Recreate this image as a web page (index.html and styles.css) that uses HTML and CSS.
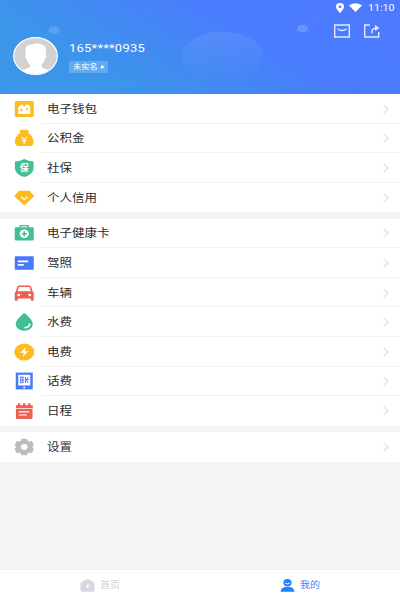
FILE: index.html
```
<!DOCTYPE html>
<html lang="zh-CN">
<head>
    <meta charset="UTF-8">
    <meta name="viewport" content="width=device-width, initial-scale=1.0">
    <title>我的</title>
    <link rel="stylesheet" href="styles.css">
</head>
<body>
    <div class="app">
        <header class="header">
            <svg class="header-bg" viewBox="0 0 400 94" preserveAspectRatio="none">
                <defs>
                    <linearGradient id="bubble" x1="0" y1="0" x2="0" y2="1">
                        <stop offset="0" stop-color="#fff" stop-opacity=".08"/>
                        <stop offset="1" stop-color="#fff" stop-opacity="0"/>
                    </linearGradient>
                </defs>
                <ellipse cx="222.500" cy="57" rx="41" ry="25.500" fill="url(#bubble)"/>
                <ellipse cx="54" cy="30" rx="5.500" ry="3.800" fill="#fff" fill-opacity=".16"/>
                <ellipse cx="302.500" cy="28.500" rx="5.500" ry="3.800" fill="#fff" fill-opacity=".18"/>
                <path d="M0 63L50 33M127 27L170 0M307 26L338 6" stroke="#fff" stroke-opacity=".07" fill="none"/>
            </svg>
            <div class="status-bar">
                <svg width="8" height="10" viewBox="0 0 8 10"><path fill="#fff" fill-rule="evenodd" d="M4 0a4 3.700 0 0 0-4 3.700C0 6.200 4 10 4 10s4-3.800 4-6.300A4 3.700 0 0 0 4 0zm0 2.400a1.500 1.300 0 1 1 0 2.600 1.500 1.300 0 0 1 0-2.600z"/></svg>
                <svg class="wifi" width="13" height="9" viewBox="0 0 13 9"><path fill="#fff" d="M0 2.600Q6.500-2 13 2.600L6.500 9z"/></svg>
                <span class="time">11:10</span>
            </div>
            <div class="actions">
                <svg width="16" height="14" viewBox="0 0 16 14" fill="none" stroke="#e4ebff" stroke-width="1.400"><path d="M.7 1h14.600v12H.7zM3.500 4.800Q8 8.300 12.500 4.800"/></svg>
                <svg width="16" height="14" viewBox="0 0 16 14" fill="none" stroke="#e4ebff" stroke-width="1.400"><path d="M6 1H.7v12h14V8M8 9.500V7q0-2.700 4-2.700"/><path d="M11 .8L15.500 4.300l-4.500 2.500z" fill="#e4ebff" stroke="none"/></svg>
            </div>
            <div class="user">
                <svg class="avatar" viewBox="0 0 45 38" preserveAspectRatio="none">
                    <defs><clipPath id="face"><ellipse cx="22.500" cy="19" rx="21.300" ry="17.900"/></clipPath></defs>
                    <ellipse cx="22.500" cy="19" rx="21.800" ry="18.400" fill="#d2d2d2" stroke="#fff" stroke-width="1.200"/>
                    <path clip-path="url(#face)" fill="#fff" d="M12.800 17.500C12 11 13 8 17 8C21 6 27 6 30 8C33 9 33.500 12 32.700 17.500C34 18 33.500 21.500 31.800 22C31.300 25 30 26.500 28.500 28C28 31 31 31.500 37 33.500V38H8V33.500C14 31.500 18 31 17 28C15.500 26.500 14.200 25 13.700 22C12 21.500 11.500 18 12.800 17.500Z"/>
                </svg>
                <div class="info">
                    <div class="phone">165****0935</div>
                    <div class="badge"><span class="badge-text">未实名</span><svg width="4" height="4" viewBox="0 0 4 4"><path fill="#fff" d="M0 0l4 2-4 2z"/></svg></div>
                </div>
            </div>
        </header>

        <main class="menu">
            <!-- Wallet and credit -->
            <section class="group">
                <div class="row">
                    <svg class="icon" viewBox="0 0 20 18"><rect x=".5" y="1" width="19" height="16" rx="1.500" fill="#fdbb1f"/><path fill="#fff" d="M4 6.500h12V14H4zM6 4.800h3v2H6zM11 4.800h4v2h-4z"/><path stroke="#fdbb1f" stroke-width=".9" d="M5.500 10h3.500M7.200 8.400v3.200"/><path fill="#fdbb1f" d="M12 8h1.500v2H12z"/></svg>
                    <span class="label">电子钱包</span>
                    <svg class="arrow" viewBox="0 0 6 10"><path d="M.7 1l4.600 4L.7 9"/></svg>
                </div>
                <div class="row">
                    <svg class="icon" viewBox="0 0 20 18"><path fill="#fdbb1f" d="M5.500 1Q10 .3 14.500 1L14 4C17.500 5.500 19.300 10 19.300 13.500 19.300 16 17.500 17 15.500 17h-11C2.500 17 .7 16 .7 13.500.7 10 2.500 5.500 6 4z"/><path fill="none" stroke="#fff" stroke-width="1.200" d="M7.500 7.800l2.500 3.200 2.500-3.200M10 10.500v4.200M8 11.900h4"/></svg>
                    <span class="label">公积金</span>
                    <svg class="arrow" viewBox="0 0 6 10"><path d="M.7 1l4.600 4L.7 9"/></svg>
                </div>
                <div class="row">
                    <svg class="icon" viewBox="0 0 20 18"><path fill="#43bd94" d="M10 0Q14 2.300 19.300 2.500V9c0 5-5 8-9.300 9C5.700 17 .7 14 .7 9V2.500Q6 2.300 10 0z"/><text class="shield-text" x="10" y="12.200">保</text></svg>
                    <span class="label">社保</span>
                    <svg class="arrow" viewBox="0 0 6 10"><path d="M.7 1l4.600 4L.7 9"/></svg>
                </div>
                <div class="row">
                    <svg class="icon" viewBox="0 0 20 18"><path fill="#fdbb1f" d="M4.500 1.800h11L20 7.300 10 16.500 0 7.300z"/><path fill="none" stroke="#fff" stroke-width="1.300" d="M6.800 8l3.200 2.500L13.200 8"/></svg>
                    <span class="label">个人信用</span>
                    <svg class="arrow" viewBox="0 0 6 10"><path d="M.7 1l4.600 4L.7 9"/></svg>
                </div>
            </section>

            <!-- Daily services -->
            <section class="group">
                <div class="row">
                    <svg class="icon" viewBox="0 0 20 18"><path fill="none" stroke="#43bd94" stroke-width="1.300" d="M6 4V1.700h8V4"/><rect x=".5" y="3.300" width="19" height="13.200" rx="1.300" fill="#43bd94"/><ellipse cx="10" cy="9.800" rx="4.600" ry="4.200" fill="#fff"/><path stroke="#43bd94" stroke-width="1.600" d="M7.300 9.800h5.400M10 7.300v5"/></svg>
                    <span class="label">电子健康卡</span>
                    <svg class="arrow" viewBox="0 0 6 10"><path d="M.7 1l4.600 4L.7 9"/></svg>
                </div>
                <div class="row">
                    <svg class="icon" viewBox="0 0 20 18"><rect x=".5" y="2.300" width="19" height="13.400" rx=".6" fill="#4978fb"/><path stroke="#fff" stroke-width="1.700" d="M3.500 7.300h10.500M3.500 10.900h6"/></svg>
                    <span class="label">驾照</span>
                    <svg class="arrow" viewBox="0 0 6 10"><path d="M.7 1l4.600 4L.7 9"/></svg>
                </div>
                <div class="row">
                    <svg class="icon" viewBox="0 0 20 18"><path fill="#ed604f" fill-rule="evenodd" d="M4.500 1.500h11Q16.500 1.500 17 3l1.400 4.500q1.100.5 1.100 2V16q0 .7-.7.700h-1.600q-.7 0-.7-.7v-1.500h-13V16q0 .7-.7.700H1.200Q.5 16.700.5 16V9.500q0-1.500 1.100-2L3 3q.5-1.500 1.500-1.500zM4.700 3L3.400 7.200h13.200L15.300 3z"/><ellipse cx="4.500" cy="11" rx="1.500" ry="1.200" fill="#fff"/><ellipse cx="15.500" cy="11" rx="1.500" ry="1.200" fill="#fff"/></svg>
                    <span class="label">车辆</span>
                    <svg class="arrow" viewBox="0 0 6 10"><path d="M.7 1l4.600 4L.7 9"/></svg>
                </div>
                <div class="row">
                    <svg class="icon" viewBox="0 0 20 18"><path fill="#43bd94" d="M10 .2q1 0 2 1.300c3 3 6.500 6 6.500 9.200 0 4-3.500 7-8.500 7s-8.500-3-8.500-7C1.500 7.500 5 4.500 8 1.500Q9 .2 10 .2z"/><path fill="none" stroke="#fff" stroke-width="1.400" d="M10.200 14.800q4.700-.3 5.500-4.300"/></svg>
                    <span class="label">水费</span>
                    <svg class="arrow" viewBox="0 0 6 10"><path d="M.7 1l4.600 4L.7 9"/></svg>
                </div>
                <div class="row">
                    <svg class="icon" viewBox="0 0 20 18"><ellipse cx="10" cy="9" rx="10" ry="8.600" fill="#fdbb1f"/><path fill="#fff" d="M11.500 4L6 9.700h3.500L8.500 14 14 8.300h-3.500z"/></svg>
                    <span class="label">电费</span>
                    <svg class="arrow" viewBox="0 0 6 10"><path d="M.7 1l4.600 4L.7 9"/></svg>
                </div>
                <div class="row">
                    <svg class="icon" viewBox="0 0 20 18"><rect x="1.500" y=".6" width="17" height="16.800" fill="#4978fb"/><path fill="#fff" d="M4 2.800h12v10.700H4z"/><path fill="none" stroke="#4978fb" stroke-width="1" d="M6 5.200h3.500M6.500 5v6M6 8h3.500M8.700 5.500V11M6 10.700h3M11.200 5v6M11 7.500h3.500M13.500 5v2.500M12 8l2.300 3"/><circle cx="10" cy="15.500" r="1" fill="#fff"/></svg>
                    <span class="label">话费</span>
                    <svg class="arrow" viewBox="0 0 6 10"><path d="M.7 1l4.600 4L.7 9"/></svg>
                </div>
                <div class="row">
                    <svg class="icon" viewBox="0 0 20 18"><path fill="#ed604f" d="M1.700 3.300h2V1.300h2.300v2h2.800V1.300h2.300v2h2.800V1.300h2.300v2h2.400V6.200H1.700zM1.700 7.100h16.600v9q0 .8-.8.800h-15q-.8 0-.8-.8z"/><path stroke="#fff" stroke-width="1.200" d="M4.500 9.800h10.500M4.500 13h8"/></svg>
                    <span class="label">日程</span>
                    <svg class="arrow" viewBox="0 0 6 10"><path d="M.7 1l4.600 4L.7 9"/></svg>
                </div>
            </section>

            <section class="group">
                <div class="row">
                    <svg class="icon" viewBox="0 0 20 18"><path fill="#b9bbbd" stroke="#b9bbbd" stroke-linejoin="round" fill-rule="evenodd" d="M7.500 1.300h5l.8 2 1.500.7 2.700-.5L19 7l-1.400 2 1.400 2-1.500 3.500-2.700-.5-1.500.7-.8 2h-5l-.8-2-1.500-.7-2.700.5L1 11l1.400-2L1 7l1.500-3.500 2.700.5 1.500-.7zM10 5.500a4 3.500 0 1 0 0 7 4 3.500 0 0 0 0-7z"/></svg>
                    <span class="label">设置</span>
                    <svg class="arrow" viewBox="0 0 6 10"><path d="M.7 1l4.600 4L.7 9"/></svg>
                </div>
            </section>
        </main>

        <nav class="tabs">
            <div class="tab">
                <svg width="15" height="13" viewBox="0 0 15 13"><path fill="#d7d7e2" d="M7.500 0q.8 0 2 .8l4 2.200q1 .7 1 1.800v6.700q0 1.200-1.300 1.200H1.800Q.5 12.700.5 11.500V4.800Q.5 3.700 1.500 3l4-2.200q1.200-.8 2-.8z"/><path fill="#fff" d="M6.500 5.500h2V9h-2z"/></svg>
                <span class="tab-text">首页</span>
            </div>
            <div class="tab active">
                <svg width="15" height="13" viewBox="0 0 15 13"><path fill="#2482f8" d="M7.500 0c2.700 0 4.200 1.600 4.200 3.700S10 7.500 7.500 7.500 3.300 5.800 3.300 3.700 4.800 0 7.500 0zM5 8h5q4 .7 4.500 4.700H.5Q1 8.700 5 8z"/><path fill="none" stroke="#fff" stroke-width="1" d="M5.200 4Q7.500 6 9.800 4"/></svg>
                <span class="tab-text">我的</span>
            </div>
        </nav>
    </div>
</body>
</html>
```
FILE: styles.css
```
* {
    box-sizing: border-box;
}
body {
    margin: 0;
    font-family: Roboto, "Noto Sans CJK SC", sans-serif;
    background: #f4f4f4;
}
.app {
    display: flex;
    flex-direction: column;
    width: 400px;
    height: 600px;
    overflow: hidden;
}
.header {
    position: relative;
    flex: none;
    height: 94px;
    background: linear-gradient(32deg, #3c96e8 0%, #3c95ea 24%, #4a7bfe 65%, #4c7afe 100%);
    color: #fff;
}
.header-bg {
    position: absolute;
    top: 0;
    left: 0;
    width: 100%;
    height: 100%;
}
.status-bar {
    display: flex;
    justify-content: flex-end;
    align-items: center;
    height: 15px;
    padding-right: 6px;
}
.wifi {
    margin: 0 6px 0 5px;
}
.time {
    width: 26px;
    font-size: 9.2px;
    line-height: 15px;
    transform: scaleX(1.16);
    transform-origin: left;
}
.actions {
    display: flex;
    justify-content: flex-end;
    gap: 14px;
    height: 22px;
    padding: 9px 20px 0 0;
}
.user {
    display: flex;
    height: 38px;
    padding-left: 13px;
}
.avatar {
    position: relative;
    width: 45px;
    height: 38px;
}
.info {
    padding: 4px 0 0 11px;
}
.phone {
    height: 15px;
    font-size: 11.2px;
    line-height: 15px;
    letter-spacing: 0.2px;
    transform: scaleX(1.16);
    transform-origin: left;
}
.badge {
    display: flex;
    align-items: center;
    width: 39px;
    height: 12px;
    margin-top: 5px;
    padding-left: 4px;
    background: rgba(255, 255, 255, 0.2);
}
.badge-text {
    width: 28px;
    font-size: 7px;
    line-height: 12px;
    transform: scaleX(1.17);
    transform-origin: left;
}
.menu {
    flex: 1;
}
.group {
    margin-bottom: 6.2px;
    background: #fff;
}
.row {
    display: flex;
    align-items: center;
    height: 29.6px;
    padding: 0 11px 0 14px;
    background: linear-gradient(#f3f3f3, #f3f3f3) 41px 100% / 100% 1px no-repeat;
}
.row:last-child {
    background: none;
}
.icon {
    width: 20.5px;
    height: 18px;
}
.label {
    flex: 1;
    margin-left: 12.5px;
    padding-top: 2px;
    color: #2b2b2b;
    font-size: 10.8px;
    line-height: 20px;
    transform: scaleX(1.155);
    transform-origin: left;
}
.arrow {
    width: 6px;
    height: 10px;
    fill: none;
    stroke: #dedede;
    stroke-width: 1.1;
}
.shield-text {
    fill: #fff;
    font-size: 9px;
    font-weight: bold;
    text-anchor: middle;
}
.tabs {
    display: flex;
    flex: none;
    height: 31px;
    background: #fff;
    border-top: 1px solid #efefef;
}
.tab {
    display: flex;
    justify-content: center;
    align-items: center;
    gap: 5px;
    flex: 1;
    color: #c9c9d2;
}
.tab-text {
    width: 20px;
    font-size: 8.6px;
    line-height: 16px;
    transform: scaleX(1.16);
    transform-origin: left;
}
.active {
    color: #4285f4;
}
```
